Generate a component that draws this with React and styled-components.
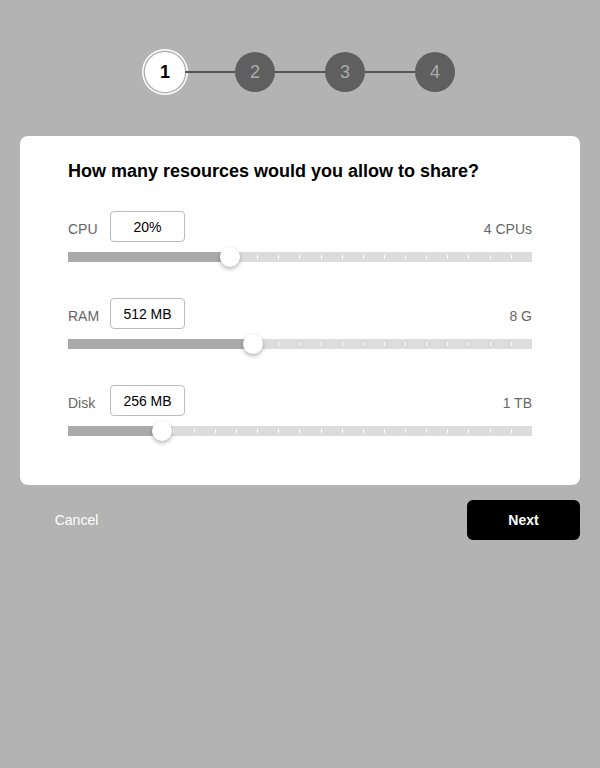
import React from 'react';
import styled, { createGlobalStyle } from 'styled-components';

const GlobalStyle = createGlobalStyle`
	body {
		margin: 0;
		background: #b3b3b3;
		font-family: "Liberation Sans", Arial, sans-serif;
	}
`;

const Page = styled.div`
	padding: 52px 20px;
	display: flex;
	flex-direction: column;
`;

const Stepper = styled.div`
	display: flex;
	align-items: center;
	justify-content: center;
	height: 40px;
`;

const Step = styled.div`
	width: 40px;
	height: 40px;
	border-radius: 50%;
	display: flex;
	align-items: center;
	justify-content: center;
	font-size: 18px;
	background: ${(p) => (p.active ? '#fff' : '#5f5f5f')};
	color: ${(p) => (p.active ? '#000' : '#ababab')};
	font-weight: ${(p) => (p.active ? 'bold' : 'normal')};
	box-shadow: ${(p) => (p.active ? '0 0 0 1.5px #b3b3b3, 0 0 0 3px #fff' : 'none')};
`;

const Connector = styled.div`
	width: 50px;
	height: 2px;
	background: #555;
`;

const Card = styled.div`
	margin-top: 44px;
	background: #fff;
	border-radius: 8px;
	padding: 24px 48px 49px;
`;

const Title = styled.h1`
	margin: 0 0 29px;
	font-size: 18px;
	line-height: 22px;
	font-weight: bold;
	color: #000;
`;

const Resource = styled.div`
	display: flex;
	flex-direction: column;
	gap: 10px;
	& + & {
		margin-top: 36px;
	}
`;

const Row = styled.div`
	display: flex;
	align-items: center;
	height: 31px;
`;

const Label = styled.span`
	width: 42px;
	padding-top: 4px;
	font-size: 14px;
	color: #666;
`;

const ValueBox = styled.div`
	width: 73px;
	height: 29px;
	border: 1px solid #bbb;
	border-radius: 4px;
	display: flex;
	align-items: center;
	justify-content: center;
	font-size: 14px;
	color: #000;
`;

const Max = styled.span`
	margin-left: auto;
	padding-top: 4px;
	font-size: 14px;
	color: #666;
`;

const Track = styled.div`
	position: relative;
	height: 10px;
	background: #dcdcdc;
`;

const Ticks = styled.div`
	position: absolute;
	inset: 0;
	display: flex;
	align-items: center;
	justify-content: space-evenly;
`;

const Tick = styled.span`
	width: 1px;
	height: 4px;
	background: #fff;
`;

const Fill = styled.div`
	position: absolute;
	left: 0;
	top: 0;
	bottom: 0;
	background: #aaa;
`;

const Thumb = styled.div`
	position: absolute;
	top: 50%;
	width: 20px;
	height: 20px;
	margin: -10px 0 0 -10px;
	border-radius: 50%;
	background: #fff;
	box-shadow: 0 2px 4px rgba(0, 0, 0, 0.3);
`;

const Footer = styled.div`
	display: flex;
	justify-content: space-between;
	margin-top: 15px;
`;

const Button = styled.button`
	width: 113px;
	height: 40px;
	border: none;
	border-radius: 6px;
	font-family: inherit;
	font-size: 14px;
	background: ${(p) => (p.primary ? '#000' : 'transparent')};
	color: #fff;
	font-weight: ${(p) => (p.primary ? 'bold' : 'normal')};
	cursor: pointer;
`;

const resources = [
	{ name: 'CPU', value: '20%', max: '4 CPUs', pos: 0.349 },
	{ name: 'RAM', value: '512 MB', max: '8 G', pos: 0.399 },
	{ name: 'Disk', value: '256 MB', max: '1 TB', pos: 0.203 },
];

const ticks = Array.from({ length: 21 });

export default function App() {
	return (
		<>
			<GlobalStyle />
			<Page>
				<Stepper>
					{[1, 2, 3, 4].map((n) => (
						<React.Fragment key={n}>
							{n > 1 && <Connector />}
							<Step active={n === 1}>{n}</Step>
						</React.Fragment>
					))}
				</Stepper>
				<Card>
					<Title>How many resources would you allow to share?</Title>
					{resources.map((r) => (
						<Resource key={r.name}>
							<Row>
								<Label>{r.name}</Label>
								<ValueBox>{r.value}</ValueBox>
								<Max>{r.max}</Max>
							</Row>
							<Track>
								<Ticks>
									{ticks.map((_, i) => (
										<Tick key={i} />
									))}
								</Ticks>
								<Fill style={{ width: `${r.pos * 100}%` }} />
								<Thumb style={{ left: `${r.pos * 100}%` }} />
							</Track>
						</Resource>
					))}
				</Card>
				<Footer>
					<Button>Cancel</Button>
					<Button primary>Next</Button>
				</Footer>
			</Page>
		</>
	);
}
